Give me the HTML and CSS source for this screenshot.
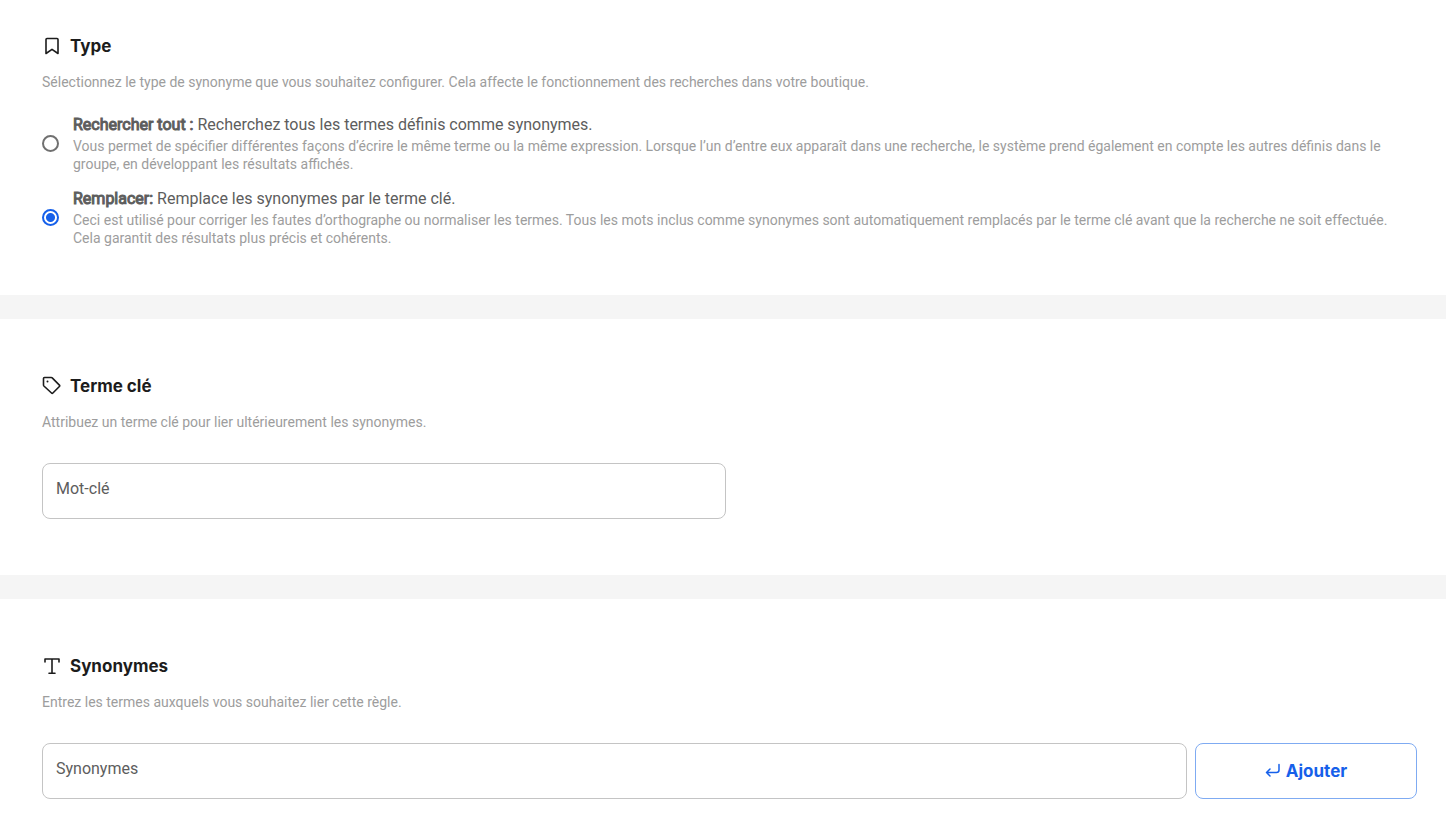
FILE: index.html
```html
<!DOCTYPE html>
<html lang="fr">
<head>
<meta charset="utf-8">
<meta name="viewport" content="width=device-width, initial-scale=1">
<title>Synonymes</title>
<link rel="stylesheet" href="styles.css">
</head>
<body>
<form class="page">
  <section class="panel panel-type">
    <h2 class="title">
      <svg class="icon" viewBox="0 0 20 20" aria-hidden="true"><path d="M4 3.500Q4 2.500 5 2.500h10q1 0 1 1V17.500L10 13.300 4 17.500Z"/></svg>
      Type
    </h2>
    <p class="hint">Sélectionnez le type de synonyme que vous souhaitez configurer. Cela affecte le fonctionnement des recherches dans votre boutique.</p>
    <div class="options">
      <label class="option">
        <input class="radio" type="radio" name="type" value="all">
        <span class="option-text">
          <span class="option-name"><b class="option-key">Rechercher tout :</b> Recherchez tous les termes définis comme synonymes.</span>
          <span class="option-note">Vous permet de spécifier différentes façons d’écrire le même terme ou la même expression. Lorsque l’un d’entre eux apparaît dans une recherche, le système prend également en compte les autres définis dans le groupe, en développant les résultats affichés.</span>
        </span>
      </label>
      <label class="option">
        <input class="radio" type="radio" name="type" value="replace" checked>
        <span class="option-text">
          <span class="option-name"><b class="option-key">Remplacer:</b> Remplace les synonymes par le terme clé.</span>
          <span class="option-note">Ceci est utilisé pour corriger les fautes d’orthographe ou normaliser les termes. Tous les mots inclus comme synonymes sont automatiquement remplacés par le terme clé avant que la recherche ne soit effectuée. Cela garantit des résultats plus précis et cohérents.</span>
        </span>
      </label>
    </div>
  </section>
  <section class="panel">
    <h2 class="title">
      <svg class="icon" viewBox="0 0 20 20" aria-hidden="true"><path d="M1.500 2.500q0-1 1-1h6.800q.5 0 .9.400l7.200 7.200q.7.700 0 1.400l-6.500 6.500q-.7.700-1.400 0L1.900 10q-.4-.4-.4-.9Z"/><circle class="dot" cx="5.500" cy="5.500" r="1"/></svg>
      Terme clé
    </h2>
    <p class="hint">Attribuez un terme clé pour lier ultérieurement les synonymes.</p>
    <div class="fields half">
      <input class="field" type="text" placeholder="Mot-clé" aria-label="Mot-clé">
    </div>
  </section>
  <section class="panel">
    <h2 class="title">
      <svg class="icon" viewBox="0 0 20 20" aria-hidden="true"><path d="M3 6V3h14v3M10 3v14.200M7 17.200h6"/></svg>
      Synonymes
    </h2>
    <p class="hint">Entrez les termes auxquels vous souhaitez lier cette règle.</p>
    <div class="fields">
      <input class="field" type="text" placeholder="Synonymes" aria-label="Synonymes">
      <button class="add" type="button">
        <svg class="enter" viewBox="0 0 16 16" aria-hidden="true"><path d="M14 1.500v5.500q0 2.500-2.500 2.500H1.500M5 6 1.500 9.500 5 13"/></svg>
        Ajouter
      </button>
    </div>
  </section>
</form>
</body>
</html>
```
FILE: styles.css
```css
* { box-sizing: border-box; }
body {
  margin: 0;
  background: #f5f5f5;
  color: #5d5d5d;
  font: 16px/24px Roboto, sans-serif;
}
.page {
  display: grid;
  grid-template-rows: auto auto 1fr;
  gap: 24px;
  min-height: 100vh;
}
.panel { padding: 55px 29px 56px 42px; background: #fff; }
.panel:last-child { padding-bottom: 16px; }
.panel-type { padding-top: 34px; padding-bottom: 48px; }
.title {
  display: flex;
  align-items: center;
  gap: 8px;
  margin: 0;
  color: #1c1c1c;
  font: 700 17px/24px Inter, sans-serif;
}
.icon {
  width: 20px;
  height: 20px;
  fill: none;
  stroke: #1c1c1c;
  stroke-width: 1.6;
  stroke-linecap: round;
  stroke-linejoin: round;
}
.icon .dot { fill: #1c1c1c; stroke: none; }
.hint { margin: 14px 0 0; color: #9d9d9d; font-size: 14px; line-height: 20px; }
.options { display: grid; gap: 14px; margin-top: 21px; }
.option { display: flex; align-items: center; gap: 14px; }
.radio {
  appearance: none;
  flex: none;
  width: 17px;
  height: 17px;
  margin: 0;
  border: 2px solid #707070;
  border-radius: 50%;
}
.radio:checked {
  border-color: #1660ea;
  background: radial-gradient(circle, #1660ea 4px, #fff 5px);
}
.option-name, .option-note { display: block; }
.option-key { font-weight: 400; -webkit-text-stroke: 1px #5d5d5d; }
.option-note { color: #9d9d9d; font-size: 14px; line-height: 18px; }
.fields { display: flex; gap: 8px; margin-top: 31px; }
.half { width: calc(50% - 4px); }
.field {
  flex: 1;
  min-width: 0;
  height: 56px;
  padding: 0 13px 5px;
  border: 1px solid #c4c4c4;
  border-radius: 8px;
  color: #5d5d5d;
  font: 16px/24px Roboto, sans-serif;
}
.field::placeholder { color: #5d5d5d; opacity: 1; }
.add {
  display: flex;
  align-items: center;
  justify-content: center;
  gap: 5px;
  width: 222px;
  border: 1px solid #7fabf2;
  border-radius: 8px;
  background: #fff;
  color: #1660ea;
  font: 700 17px/24px Inter, sans-serif;
}
.enter {
  width: 16px;
  height: 16px;
  fill: none;
  stroke: #1660ea;
  stroke-width: 1.5;
  stroke-linecap: round;
  stroke-linejoin: round;
}
```
